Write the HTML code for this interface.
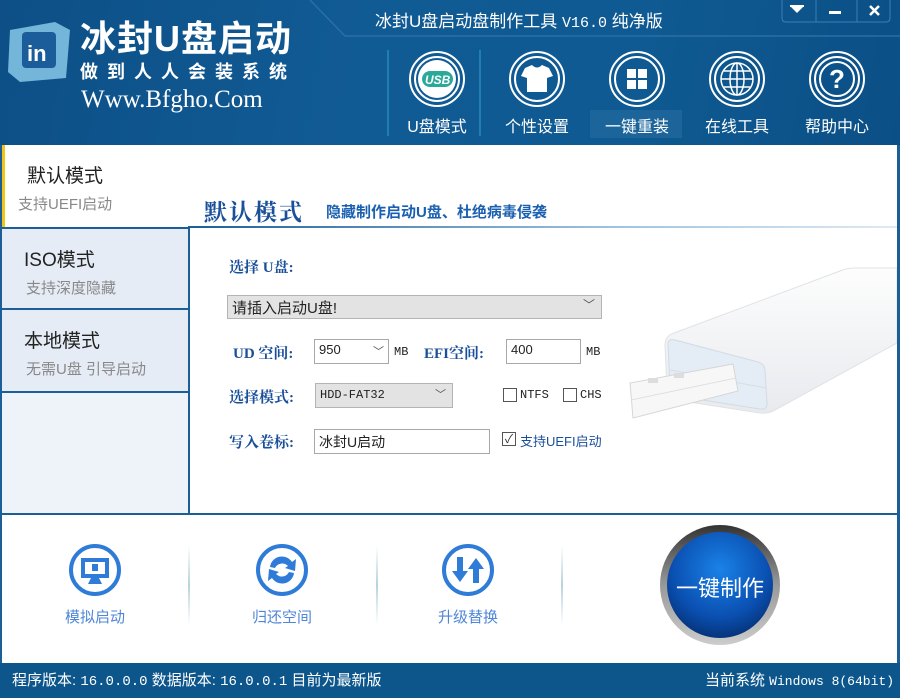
<!DOCTYPE html>
<html><head><meta charset="utf-8"><style>
*{margin:0;padding:0;box-sizing:border-box}
body{width:900px;height:698px;overflow:hidden;font-family:"Liberation Sans","Noto Sans CJK SC",sans-serif;background:#fff;position:relative}
.a{position:absolute}
.hdr{left:0;top:0;width:900px;height:145px;background:linear-gradient(100deg,#0d4f86 0%,#115b95 40%,#0f5a92 70%,#0b4f86 100%)}
.w{color:#fff}
.nl{color:#fff;font-size:16px;text-align:center;width:100px}
.tab{left:2px;width:187px;height:83px;border-bottom:2px solid #1b5e98}
.tab .t{position:absolute;left:22px;top:16px;font-size:19px;color:#222}
.tab .s{position:absolute;left:24px;top:48px;font-size:15px;color:#888}
.lbl{color:#1a4f9a;font-weight:bold;font-size:15px;font-family:"Liberation Serif","Noto Serif CJK SC",serif}
.box{border:1px solid #a8a8a8;background:#fff;font-size:13px;color:#222;padding:2px 4px}
.sel{background:#e3e3e3;border-color:#b4b4b4}
.cb{width:14px;height:14px;border:1px solid #555;background:#fff}
.sm{font-size:12px;color:#222;font-family:"Liberation Mono",monospace}
.bl{color:#4f86d8;font-size:15px;width:120px;text-align:center}
.sep{width:2px;background:linear-gradient(#fff,#b8d3dc,#fff)}
</style></head><body>
<div class="a hdr"></div>
<svg class="a" style="left:0;top:0" width="900" height="145">
<path d="M310 0 L345 36 L900 36" stroke="#2a6ea6" stroke-width="1.5" fill="none"/>
<line x1="388" y1="50" x2="388" y2="136" stroke="#2fa3c8" stroke-width="1"/>
<line x1="480" y1="50" x2="480" y2="136" stroke="#2fa3c8" stroke-width="1"/>
<path d="M782 0 V18 Q782 22 786 22 H886 Q890 22 890 18 V0" stroke="#3a7eb6" fill="none"/>
<line x1="816" y1="0" x2="816" y2="22" stroke="#3a7eb6"/><line x1="857" y1="0" x2="857" y2="22" stroke="#3a7eb6"/>
<path d="M791 7h12l-6 6z" fill="#fff"/><rect x="790" y="5" width="14" height="2" fill="#fff"/>
<rect x="829" y="11" width="12" height="3" fill="#fff"/>
<path d="M870 6l9 9M879 6l-9 9" stroke="#fff" stroke-width="2.5"/>
<path d="M10 30 L55 22 L70 30 L66 78 L20 82 L8 72Z" fill="#8fd0ee" opacity=".8"/>
<rect x="22" y="32" width="34" height="36" rx="4" fill="#1b5d9a"/>
<text x="27" y="61" fill="#fff" font-size="22" font-weight="bold" font-family="Liberation Sans">in</text>
<g fill="none" stroke="#fff">
<circle cx="437" cy="79" r="27" stroke-width="2"/><circle cx="437" cy="79" r="22" stroke-width="2"/>
<circle cx="537" cy="79" r="27" stroke-width="2"/><circle cx="537" cy="79" r="22" stroke-width="2"/>
<circle cx="637" cy="79" r="27" stroke-width="2"/><circle cx="637" cy="79" r="22" stroke-width="2"/>
<circle cx="737" cy="79" r="27" stroke-width="2"/><circle cx="737" cy="79" r="22" stroke-width="2"/>
<circle cx="837" cy="79" r="27" stroke-width="2"/><circle cx="837" cy="79" r="22" stroke-width="2"/>
</g>
<circle cx="437" cy="79" r="19" fill="#fff"/>
<rect x="422" y="71" width="31" height="16" rx="8" fill="#2aa99a"/>
<text x="425" y="84" fill="#fff" font-size="12" font-weight="bold" font-style="italic" font-family="Liberation Sans">USB</text>
<path d="M525 68 L532 65 Q537 70 542 65 L549 68 L553 76 L547 78 V92 H527 V78 L521 76Z" fill="#fff"/>
<g fill="#fff"><rect x="627" y="69" width="9" height="9"/><rect x="638" y="69" width="9" height="9"/><rect x="627" y="80" width="9" height="9"/><rect x="638" y="80" width="9" height="9"/></g>
<g fill="none" stroke="#fff" stroke-width="1.5"><circle cx="737" cy="79" r="16"/><ellipse cx="737" cy="79" rx="7" ry="16"/><line x1="721" y1="79" x2="753" y2="79"/><line x1="737" y1="63" x2="737" y2="95"/><line x1="724" y1="71" x2="750" y2="71"/><line x1="724" y1="87" x2="750" y2="87"/></g>
<circle cx="837" cy="79" r="17" fill="none" stroke="#fff" stroke-width="2"/>
<text x="837" y="88" fill="#fff" font-size="26" font-weight="bold" text-anchor="middle" font-family="Liberation Sans">?</text>
<rect x="590" y="110" width="92" height="28" fill="#2a6fa3" opacity=".5"/>
</svg>
<div class="a w" style="left:80px;top:10px;font-size:36px;font-weight:bold;letter-spacing:1px">冰封U盘启动</div>
<div class="a w" style="left:80px;top:58px;font-size:18px;font-weight:bold;letter-spacing:9px">做到人人会装系统</div>
<div class="a w" style="left:81px;top:86px;font-size:25px;font-family:'Liberation Serif',serif">Www.Bfgho.Com</div>
<div class="a w" style="left:375px;top:7px;font-size:17px">冰封U盘启动盘制作工具 <span style="font-family:'Liberation Mono',monospace;font-size:15px">V16.0</span> 纯净版</div>
<div class="a nl" style="left:387px;top:113px">U盘模式</div>
<div class="a nl" style="left:487px;top:113px">个性设置</div>
<div class="a nl" style="left:587px;top:113px">一键重装</div>
<div class="a nl" style="left:687px;top:113px">在线工具</div>
<div class="a nl" style="left:787px;top:113px">帮助中心</div>

<div class="a" style="left:0;top:145px;width:2px;height:520px;background:#1b5e98"></div>
<div class="a" style="left:897px;top:145px;width:3px;height:520px;background:#1b5e98"></div>
<div class="a" style="left:2px;top:145px;width:3px;height:82px;background:#f0c419"></div>
<div class="a" style="left:2px;top:227px;width:187px;height:286px;background:#eef2f9"></div>
<div class="a tab" style="top:145px;background:#fff;border-bottom:none;left:5px"><div class="t">默认模式</div><div class="s" style="left:13px">支持UEFI启动</div></div>
<div class="a tab" style="top:227px;background:#e6ecf5;border-top:2px solid #1b5e98"><div class="t">ISO模式</div><div class="s">支持深度隐藏</div></div>
<div class="a tab" style="top:310px;background:#e6ecf5"><div class="t">本地模式</div><div class="s">无需U盘 引导启动</div></div>
<div class="a" style="left:188px;top:227px;width:2px;height:287px;background:#1b5e98"></div>
<div class="a" style="left:188px;top:226px;width:709px;height:2px;background:linear-gradient(90deg,#1b5e98,#9fc3e0 60%,#dfeaf4)"></div>
<div class="a" style="left:204px;top:194px;font-size:23px;color:#1a4f9a;font-weight:bold;font-family:'Liberation Serif','Noto Serif CJK SC',serif;letter-spacing:2px">默认模式</div>
<div class="a" style="left:326px;top:201px;font-size:15px;color:#1a5fb0;font-weight:bold">隐藏制作启动U盘、杜绝病毒侵袭</div>

<div class="a lbl" style="left:229px;top:256px">选择 U盘:</div>
<div class="a box sel" style="left:227px;top:295px;width:375px;height:24px;font-size:15px;padding:1px 4px">请插入启动U盘!<span style="position:absolute;right:6px;top:0;color:#555;font-size:12px">﹀</span></div>
<div class="a lbl" style="left:233px;top:342px">UD 空间:</div>
<div class="a box" style="left:314px;top:339px;width:75px;height:25px">950<span style="position:absolute;right:4px;top:3px;color:#555;font-size:11px">﹀</span></div>
<div class="a sm" style="left:394px;top:345px">MB</div>
<div class="a lbl" style="left:424px;top:342px">EFI空间:</div>
<div class="a box" style="left:506px;top:339px;width:75px;height:25px">400</div>
<div class="a sm" style="left:586px;top:345px">MB</div>
<div class="a lbl" style="left:229px;top:386px">选择模式:</div>
<div class="a box sel sm" style="left:315px;top:383px;width:138px;height:25px;padding-top:4px">HDD-FAT32<span style="position:absolute;right:6px;top:2px;color:#555;font-size:11px">﹀</span></div>
<div class="a cb" style="left:503px;top:388px"></div><div class="a sm" style="left:520px;top:388px">NTFS</div>
<div class="a cb" style="left:563px;top:388px"></div><div class="a sm" style="left:580px;top:388px">CHS</div>
<div class="a lbl" style="left:229px;top:431px">写入卷标:</div>
<div class="a box" style="left:314px;top:429px;width:176px;height:25px;font-size:14px">冰封U启动</div>
<div class="a cb" style="left:502px;top:432px;font-size:12px;line-height:12px;text-align:center;color:#333">✓</div>
<div class="a" style="left:520px;top:431px;font-size:13px;color:#1a4f9a">支持UEFI启动</div>

<svg class="a" style="left:0;top:0" width="897" height="513">
<defs><linearGradient id="g1" x1="0" y1="0" x2="0" y2="1"><stop offset="0" stop-color="#fdfdfd"/><stop offset="1" stop-color="#e8eaee"/></linearGradient></defs>
<path d="M665 345 Q665 336 674 333 L840 271 Q847 268 855 268 L897 268 L897 343 L775 410 Q768 414 760 413 L676 400 Q667 398 667 390Z" fill="url(#g1)" stroke="#dfe2e6"/>
<path d="M668 344 Q668 338 675 340 L758 362 Q765 364 765 371 L767 404 Q767 410 760 409 L677 396 Q671 395 670 389Z" fill="#e4edf6" stroke="#d4dae2"/>
<line x1="670" y1="370" x2="766" y2="388" stroke="#d7dde5"/>
<path d="M630 383 L733 364 L738 391 L633 418Z" fill="#f7f7f7" stroke="#d6d6d6"/>
<path d="M631 400 L736 378" stroke="#e0e0e0"/>
<rect x="648" y="378" width="10" height="5" fill="#ddd"/><rect x="674" y="373" width="10" height="5" fill="#ddd"/>
</svg>

<div class="a" style="left:0;top:513px;width:900px;height:2px;background:#1b5e98"></div>
<div class="a sep" style="left:188px;top:545px;height:80px"></div>
<div class="a sep" style="left:376px;top:545px;height:80px"></div>
<div class="a sep" style="left:561px;top:545px;height:80px"></div>
<svg class="a" style="left:0;top:515px" width="900" height="150">
<g fill="none" stroke="#2f7bd8" stroke-width="4"><circle cx="95" cy="55" r="24"/><circle cx="282" cy="55" r="24"/><circle cx="468" cy="55" r="24"/></g>
<rect x="81" y="43" width="28" height="20" fill="#2f7bd8"/><rect x="85" y="47" width="20" height="12" fill="#fff"/><path d="M92 49h6v7h-6z" fill="#2f7bd8"/><path d="M88 69h14l-3-6h-8z" fill="#2f7bd8"/>
<path d="M270 52 A12 12 0 0 1 292 47 L296 44 L295 56 L285 53 L288 51 A8 8 0 0 0 275 53Z" fill="#2f7bd8"/>
<path d="M294 58 A12 12 0 0 1 272 63 L268 66 L269 54 L279 57 L276 59 A8 8 0 0 0 289 57Z" fill="#2f7bd8"/>
<path d="M457 42h6v14h5l-8 11-8-11h5z" fill="#2f7bd8"/><path d="M473 68h6V54h5l-8-11-8 11h5z" fill="#2f7bd8"/>
<defs><radialGradient id="bg" cx=".5" cy=".35" r=".65"><stop offset="0" stop-color="#1a82e8"/><stop offset=".7" stop-color="#0a4fb0"/><stop offset="1" stop-color="#06347a"/></radialGradient>
<linearGradient id="rim" x1="0" y1="0" x2="0" y2="1"><stop offset="0" stop-color="#333"/><stop offset=".5" stop-color="#999"/><stop offset="1" stop-color="#ccc"/></linearGradient></defs>
<circle cx="720" cy="70" r="60" fill="url(#rim)"/>
<circle cx="720" cy="70" r="53" fill="url(#bg)"/>
</svg>
<div class="a bl" style="left:35px;top:606px">模拟启动</div>
<div class="a bl" style="left:222px;top:606px">归还空间</div>
<div class="a bl" style="left:408px;top:606px">升级替换</div>
<div class="a" style="left:670px;top:571px;width:100px;text-align:center;color:#fff;font-size:22px">一键制作</div>

<div class="a" style="left:0;top:663px;width:900px;height:35px;background:#0c568c"></div>
<div class="a w" style="left:12px;top:669px;font-size:15px">程序版本: <span style="font-family:'Liberation Mono',monospace;font-size:14px">16.0.0.0</span> 数据版本: <span style="font-family:'Liberation Mono',monospace;font-size:14px">16.0.0.1</span> 目前为最新版</div>
<div class="a w" style="left:705px;top:669px;font-size:15px">当前系统 <span style="font-family:'Liberation Mono',monospace;font-size:13px">Windows 8(64bit)</span></div>
</body></html>
